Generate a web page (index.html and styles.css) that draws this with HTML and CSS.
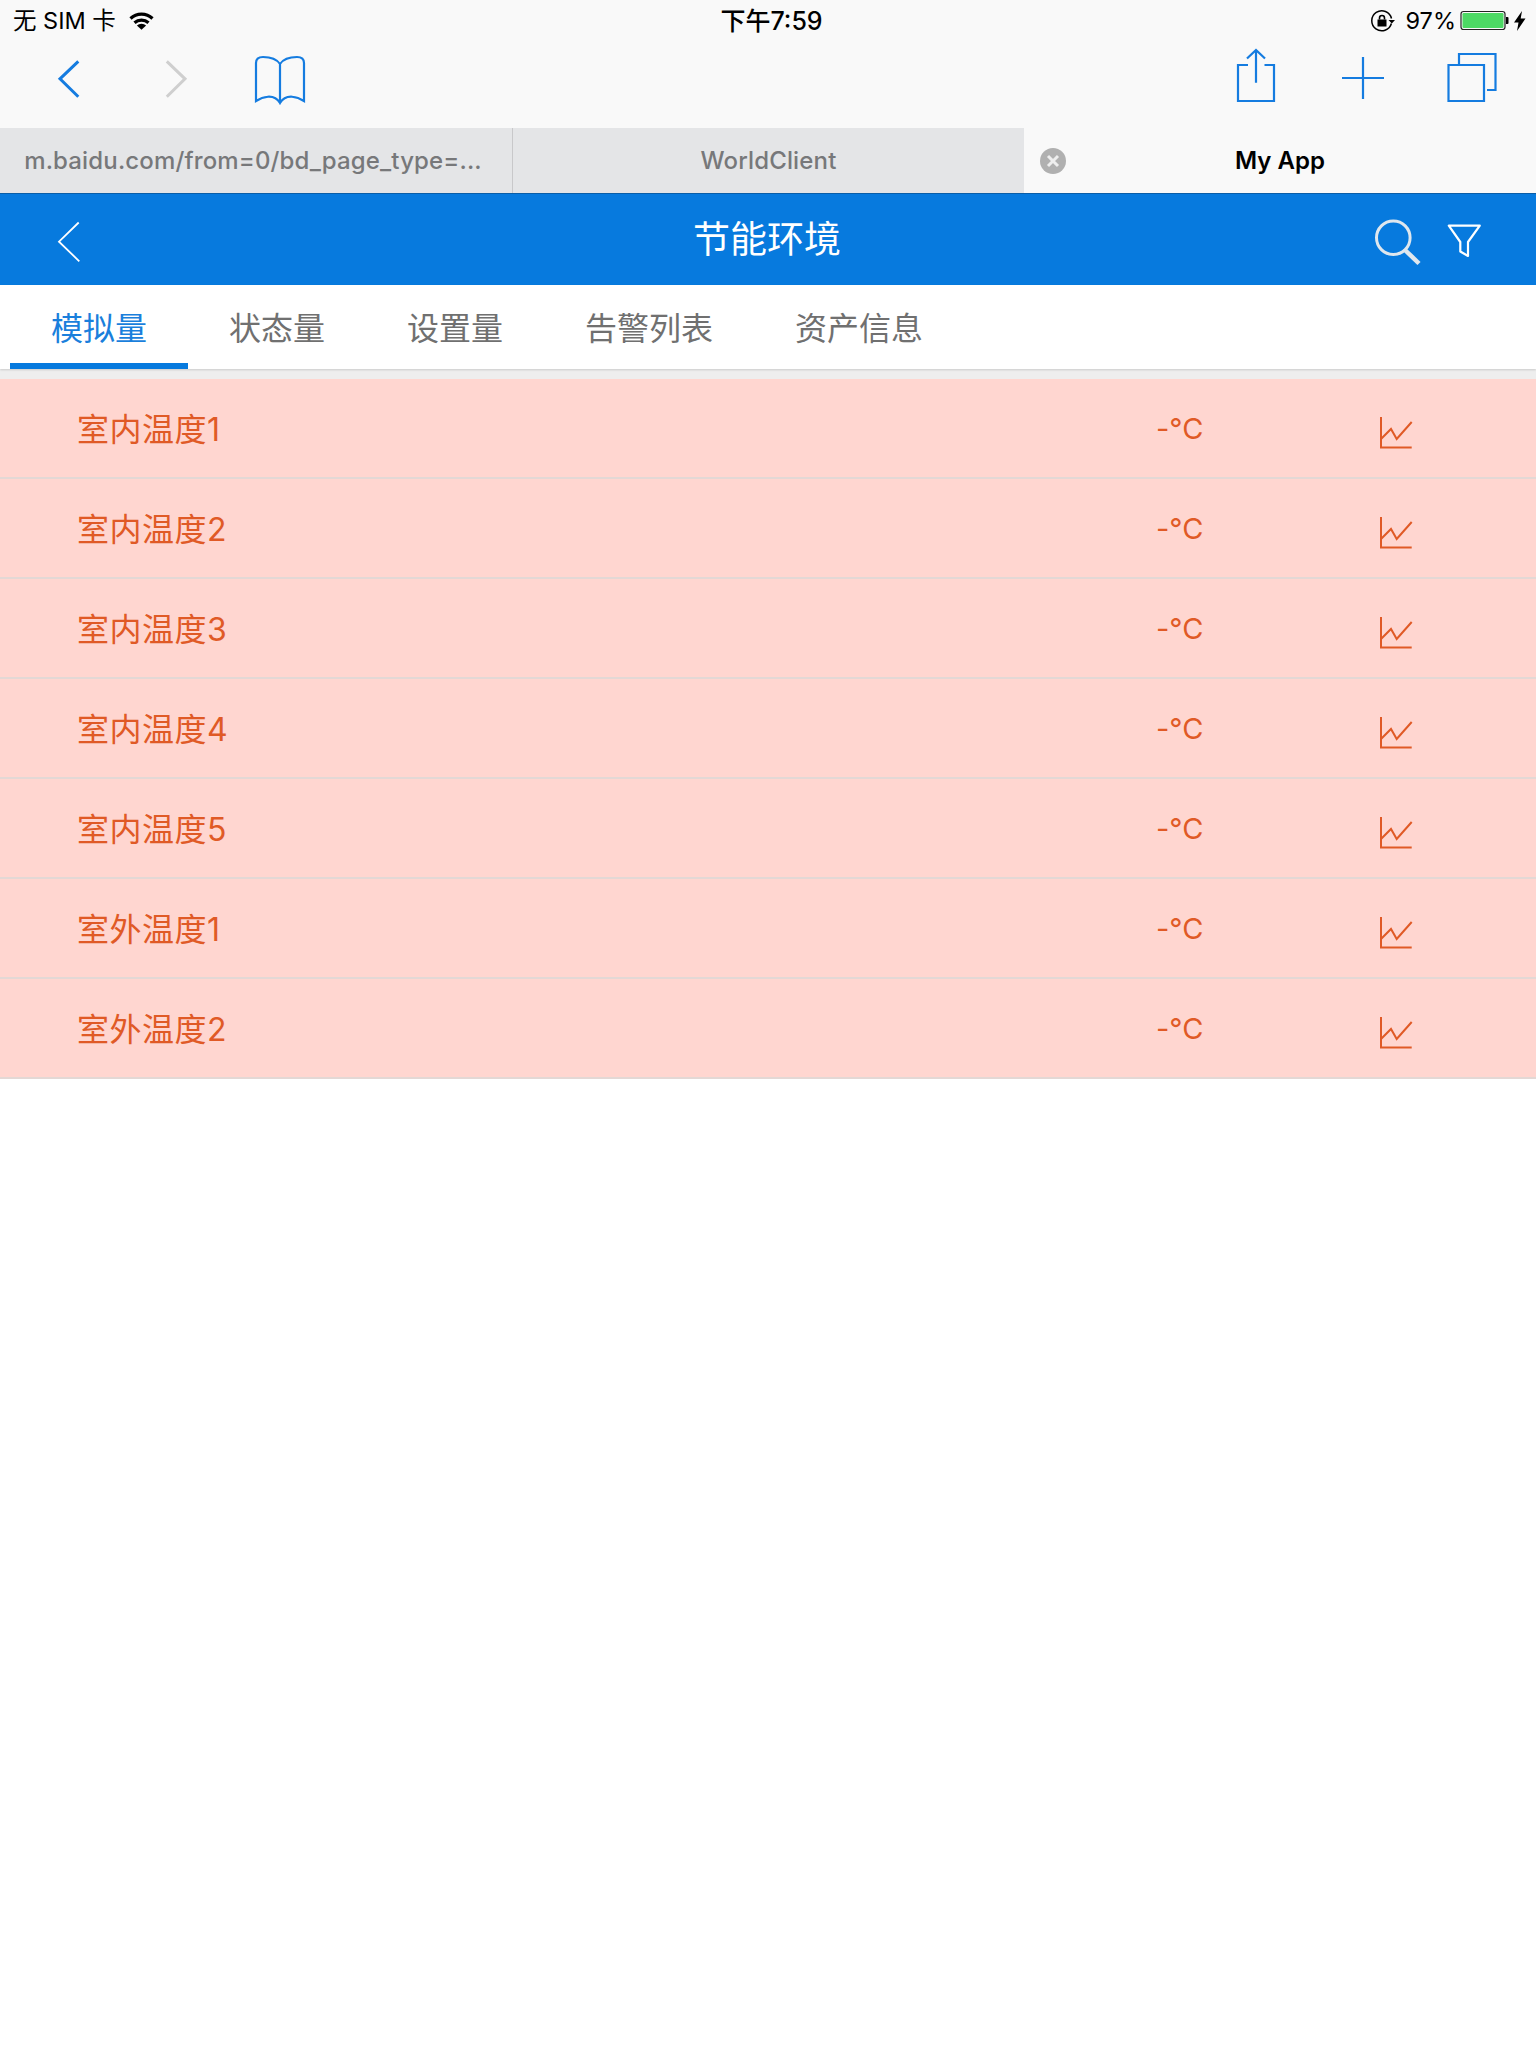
FILE: index.html
```html
<!DOCTYPE html>
<html lang="zh-CN">
<head>
<meta charset="utf-8">
<title>节能环境</title>
<link rel="stylesheet" href="styles.css">
</head>
<body>
<div class="chrome">
  <div class="status">
    <div class="status-left">
      <span>无 SIM 卡</span>
      <svg class="wifi" viewBox="128 11 25 19"><path class="wifi-arc" d="M129.5 18.5a16 16 0 0 1 22 0M133.5 22.8a10.5 10.5 0 0 1 14 0"/><path class="solid" d="M135.9 25.6a6.5 6.5 0 0 1 9.2 0l-4.6 4.2z"/></svg>
    </div>
    <div class="status-time">下午7:59</div>
    <div class="status-right">
      <svg class="rotlock" viewBox="1370 9 24 22"><path class="thin" d="M1390.4 22.5a10 10 0 1 1 .1-5"/><path class="solid" d="M1387.5 19h6.5l-3.2 3.6zM1376.5 18.5h9v7h-9z"/><path class="thin2" d="M1378.5 18.5v-1.5a2.5 2.5 0 0 1 5 0v1.5"/></svg>
      <span class="pct">97%</span>
      <svg class="battery" viewBox="1460 10 50 21"><rect class="bat-box" x="1461" y="11.5" width="44" height="18" rx="2.5"/><rect class="bat-fill" x="1462.5" y="13" width="41" height="15" rx="1.2"/><path class="solid" d="M1506 17h1.5a1 1 0 0 1 1 1v5a1 1 0 0 1-1 1h-1.5z"/></svg>
      <svg class="bolt" viewBox="1515 10 12 20"><path class="solid" d="M1523 10l-8 11.500h4.500l-1.500 8.500 8.500-12.500h-4.800z"/></svg>
    </div>
  </div>
  <div class="toolbar">
    <svg class="i-back" viewBox="59 48 20 60"><path class="blue" d="M78.300 61.300L60 78.800 78.300 96.700"/></svg>
    <svg class="i-fwd" viewBox="166 48 20 60"><path class="gray" d="M166.800 61.300L185 78.800 166.800 96.700"/></svg>
    <svg class="i-book" viewBox="255 48 50 60"><path class="blue2" d="M280 64C276 58 268 57 263 57 258 57 256 59 256 63V101C262 97 274 93 280 103 286 93 298 97 304 101V63C304 59 302 57 297 57 292 57 284 58 280 64V103"/></svg>
    <div class="spacer"></div>
    <svg class="i-share" viewBox="1236 48 40 60"><path class="blue2" d="M1248 65H1238V101H1274V65H1264.500M1256 82.700V50.500M1247 58.500L1256 50 1265 58.500"/></svg>
    <svg class="i-plus" viewBox="1342 48 42 60"><path class="blue2" d="M1342 78H1384M1363 57V99"/></svg>
    <svg class="i-tabs" viewBox="1447 48 50 60"><path class="blue2" d="M1448.500 65H1484V101H1448.500zM1459 64V54H1495.500V90H1487"/></svg>
  </div>
  <div class="tabs">
    <div class="tab tab-one">m.baidu.com/from=0/bd_page_type=...</div>
    <div class="tab">WorldClient</div>
    <div class="tab tab-active">
      <svg class="tab-close" viewBox="0 0 26 26"><circle class="close-bg" cx="13" cy="13" r="13"/><path class="close-x" d="M8 8L18 18M18 8L8 18"/></svg>
      My App
    </div>
  </div>
</div>
<header class="appbar">
  <svg class="i-hback" viewBox="58 222 22 40"><path class="white" d="M78.700 222.500L59 241.700 79.300 261.300"/></svg>
  <h1 class="title">节能环境</h1>
  <div class="appbar-actions">
    <svg class="i-search" viewBox="1375 219 46 46"><circle class="searchc" cx="1393.300" cy="237.700" r="16.800"/><path class="searchh" d="M1405 250L1419 263.500"/></svg>
    <svg class="i-filter" viewBox="1448 225 35 34"><path class="filter" d="M1449.800 226.700H1480.800L1469 243V257L1461.300 252.500V243z"/></svg>
  </div>
</header>
<nav class="nav">
  <a class="nav-item nav-active">模拟量</a>
  <a class="nav-item">状态量</a>
  <a class="nav-item">设置量</a>
  <a class="nav-item">告警列表</a>
  <a class="nav-item">资产信息</a>
</nav>
<div class="band"></div>
<main class="list">
  <div class="row"><span class="label">室内温度1</span><span class="val">-°C</span><svg class="chart" viewBox="1380 417 33 33"><path class="chart-line" d="M1381 417V447.500H1411.700M1381 439L1391 429 1396.700 439 1411.700 422"/></svg></div>
  <div class="row"><span class="label">室内温度2</span><span class="val">-°C</span><svg class="chart" viewBox="1380 417 33 33"><path class="chart-line" d="M1381 417V447.500H1411.700M1381 439L1391 429 1396.700 439 1411.700 422"/></svg></div>
  <div class="row"><span class="label">室内温度3</span><span class="val">-°C</span><svg class="chart" viewBox="1380 417 33 33"><path class="chart-line" d="M1381 417V447.500H1411.700M1381 439L1391 429 1396.700 439 1411.700 422"/></svg></div>
  <div class="row"><span class="label">室内温度4</span><span class="val">-°C</span><svg class="chart" viewBox="1380 417 33 33"><path class="chart-line" d="M1381 417V447.500H1411.700M1381 439L1391 429 1396.700 439 1411.700 422"/></svg></div>
  <div class="row"><span class="label">室内温度5</span><span class="val">-°C</span><svg class="chart" viewBox="1380 417 33 33"><path class="chart-line" d="M1381 417V447.500H1411.700M1381 439L1391 429 1396.700 439 1411.700 422"/></svg></div>
  <div class="row"><span class="label">室外温度1</span><span class="val">-°C</span><svg class="chart" viewBox="1380 417 33 33"><path class="chart-line" d="M1381 417V447.500H1411.700M1381 439L1391 429 1396.700 439 1411.700 422"/></svg></div>
  <div class="row"><span class="label">室外温度2</span><span class="val">-°C</span><svg class="chart" viewBox="1380 417 33 33"><path class="chart-line" d="M1381 417V447.500H1411.700M1381 439L1391 429 1396.700 439 1411.700 422"/></svg></div>
</main>
</body>
</html>
```
FILE: styles.css
```css
* { box-sizing: border-box; }
html, body { margin: 0; padding: 0; background: #fff; }
body {
  width: 1536px;
  min-height: 2048px;
  font-family: Inter, "Noto Sans CJK SC", sans-serif;
  color: #000;
}
svg { display: block; overflow: visible; flex: none; fill: none; }
.solid { fill: #000; }

.chrome { background: #f9f9f9; }
.status {
  height: 40px;
  display: grid;
  grid-template-columns: 1fr auto 1fr;
  align-items: center;
  font-size: 23.500px;
  line-height: 40px;
  padding: 0 10px 0 13px;
}
.status-left { display: flex; align-items: center; gap: 13px; }
.status-left span { padding-top: 1px; }
.status-time { font-weight: 500; font-size: 25px; padding-top: 1px; transform: translateX(2px); }
.status-right { display: flex; align-items: center; justify-content: flex-end; }
.wifi { width: 25px; height: 19px; }
.wifi-arc { stroke: #000; stroke-width: 3.2; fill: none; }
.rotlock { width: 24px; height: 22px; }
.thin { stroke: #000; stroke-width: 1.5; fill: none; }
.thin2 { stroke: #000; stroke-width: 1.6; fill: none; }
.pct { margin-left: 11px; }
.battery { width: 50px; height: 21px; margin-left: 4px; }
.bat-box { fill: none; stroke: #222; stroke-width: 1.2; }
.bat-fill { fill: #4cd964; }
.bolt { width: 12px; height: 20px; margin-left: 4px; }

.toolbar { height: 88px; display: flex; align-items: flex-start; padding: 8px 0 0 59px; }
.toolbar svg { height: 60px; }
.spacer { flex: 1; }
.blue { stroke: #157ce0; stroke-width: 3; fill: none; }
.gray { stroke: #cfcfcf; stroke-width: 3; fill: none; }
.blue2 { stroke: #157ce0; stroke-width: 2.200; fill: none; }
.i-back { width: 20px; }
.i-fwd { width: 20px; margin-left: 87px; }
.i-book { width: 50px; margin-left: 69px; }
.i-share { width: 40px; }
.i-plus { width: 42px; margin-left: 66px; }
.i-tabs { width: 50px; margin-left: 63px; margin-right: 39px; }

.tabs { height: 66px; display: grid; grid-template-columns: 513px 511px 512px; border-bottom: 1px solid #0a5ea8; }
.tab {
  background: #e4e5e7;
  color: #77787a;
  font-size: 24px;
  font-weight: 500;
  line-height: 65px;
  text-align: center;
  letter-spacing: 0.15px;
}
.tab-one { border-right: 1px solid #c8c8ca; padding-right: 6px; }
.tab-active { background: #f9f9f9; color: #000; font-weight: 600; letter-spacing: 0; position: relative; }
.tab-close { position: absolute; left: 16px; top: 20px; width: 26px; height: 26px; }
.close-bg { fill: #b0b0b0; }
.close-x { stroke: #eee; stroke-width: 3; fill: none; }

.appbar {
  height: 91px;
  background: #077ade;
  display: grid;
  grid-template-columns: 1fr auto 1fr;
  align-items: center;
  padding: 0 54px 0 58px;
  margin-top: 0;
}
.title { margin: 0 0 6px; font: 400 37px/50px "Noto Sans CJK SC", sans-serif; color: #fff; text-align: center; transform: translateX(-3px); }
.i-hback { width: 22px; height: 40px; margin-top: 4px; }
.white { stroke: #fff; stroke-width: 1.800; fill: none; }
.appbar-actions { display: flex; justify-content: flex-end; align-items: center; gap: 26px; }
.i-search { width: 46px; height: 46px; margin-top: 4px; }
.searchc { stroke: #dfe7ee; stroke-width: 3; fill: none; }
.searchh { stroke: #dfe7ee; stroke-width: 4.500; fill: none; }
.i-filter { width: 35px; height: 34px; margin-top: 2px; }
.filter { stroke: #fff; stroke-width: 2.200; fill: none; stroke-linejoin: round; }

.nav { height: 84px; display: flex; padding-left: 10px; background: #fff; box-shadow: 0 1px 2px rgba(0,0,0,.15); position: relative; }
.nav-item {
  padding: 0 41px;
  font: 400 32px/82px "Noto Sans CJK SC", sans-serif;
  color: #707070;
}
.nav-active { color: #1a7fdc; border-bottom: 6px solid #077ade; }
.band { height: 10px; background: #eeeeee; }

.row {
  height: 100px;
  background: #ffd6d0;
  border-bottom: 2px solid #e3d8d5;
  display: grid;
  grid-template-columns: 1079px 224px auto;
  align-items: center;
  padding: 0 0 2px 77px;
  color: #e05a26;
  font: 400 32px/44px Inter, "Noto Sans CJK SC", sans-serif;
}
.label { padding-top: 5px; letter-spacing: 0.5px; }
.val { font: 400 29px/44px Inter, sans-serif; padding-top: 3px; }
.chart { width: 33px; height: 33px; margin-top: 12px; }
.chart-line { stroke: #e05a26; stroke-width: 2; fill: none; }
```
